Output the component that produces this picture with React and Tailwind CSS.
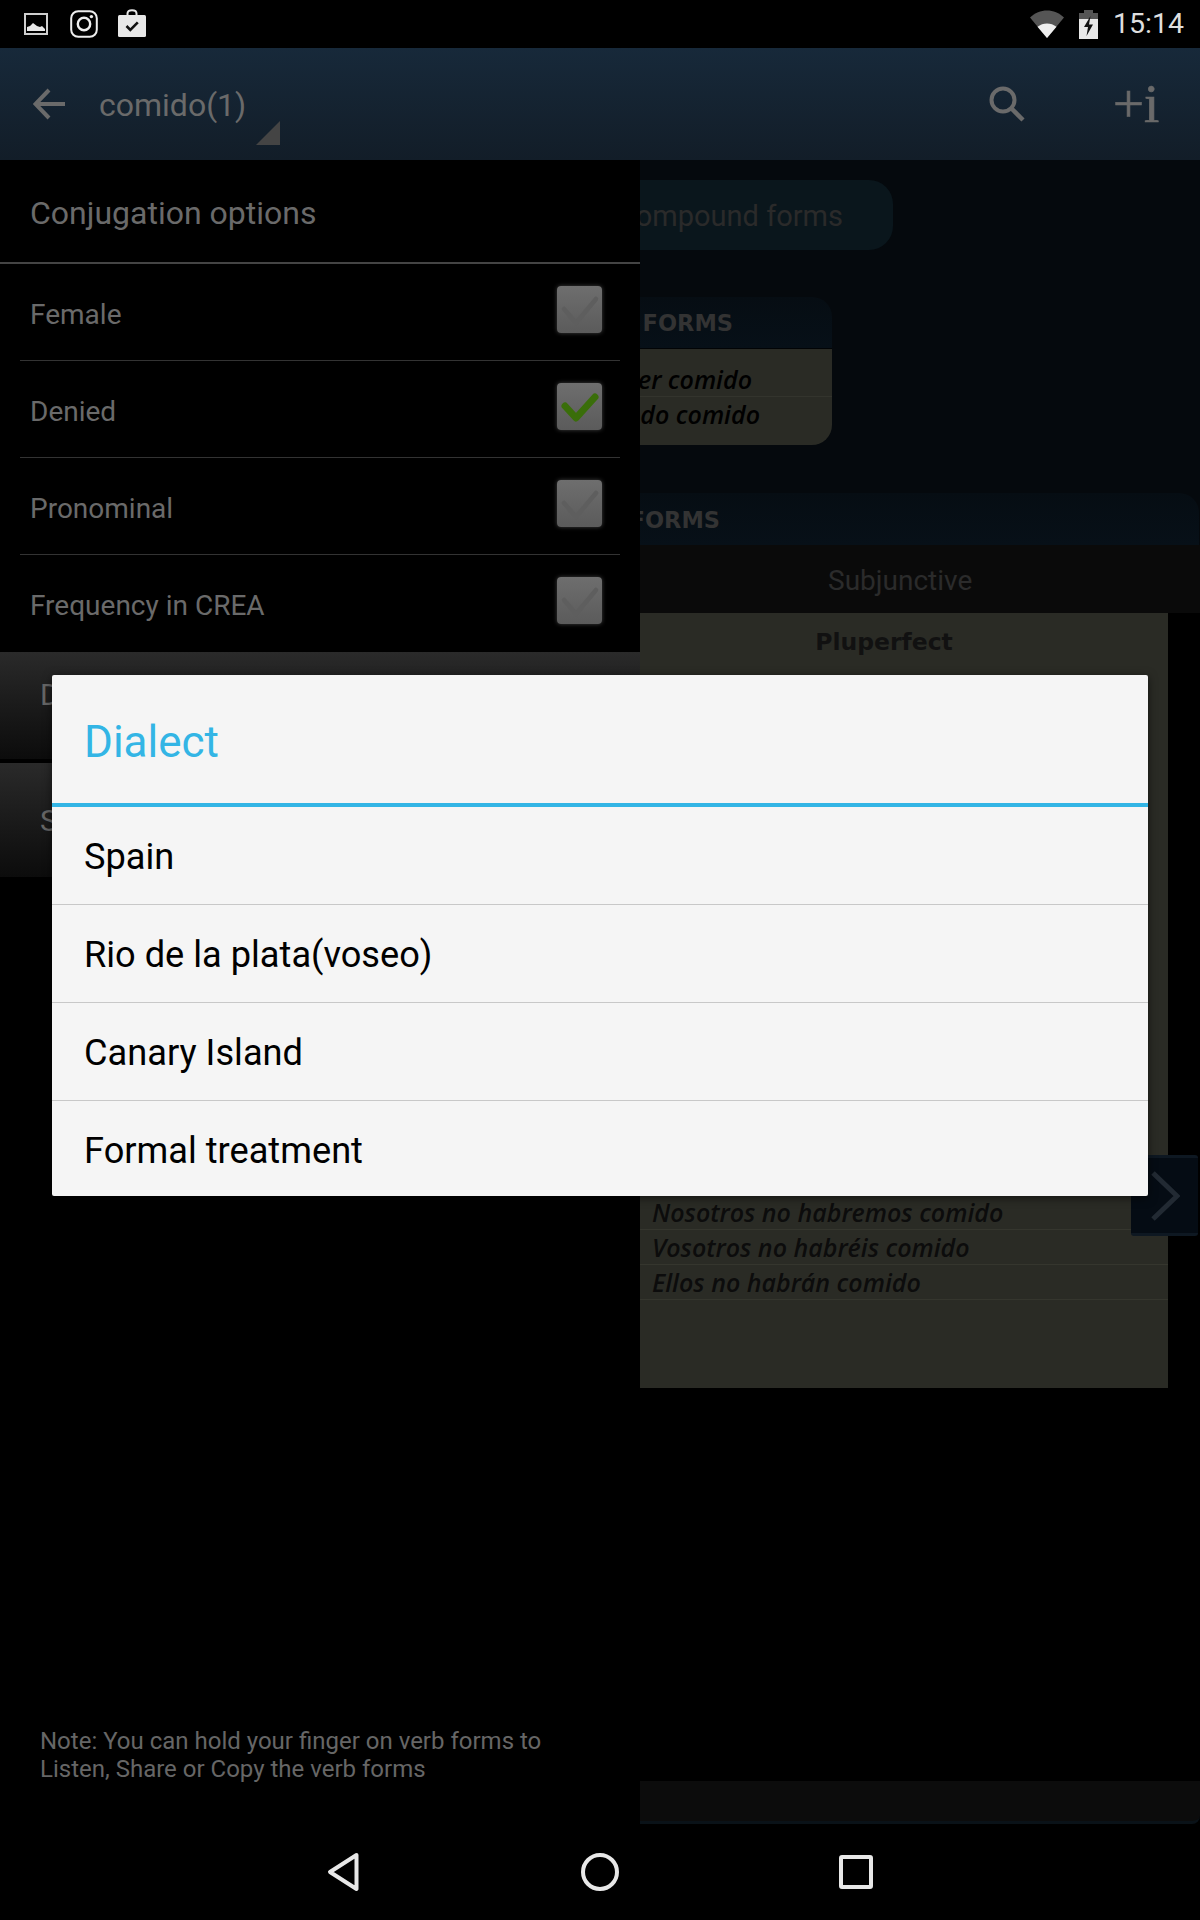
import React from 'react';

const font = { fontFamily: 'Roboto, sans-serif' };
const handFont = { fontFamily: '"Open Sans", sans-serif' };
const headFont = { fontFamily: '"DejaVu Sans", sans-serif' };

const options = [
  { label: 'Female', checked: false },
  { label: 'Denied', checked: true },
  { label: 'Pronominal', checked: false },
  { label: 'Frequency in CREA', checked: false },
];

const dialects = ['Spain', 'Rio de la plata(voseo)', 'Canary Island', 'Formal treatment'];

const verbRows = ['Nosotros no habremos comido', 'Vosotros no habréis comido', 'Ellos no habrán comido'];

const StatusLeft = () => (
  <div className="flex items-center">
    <svg width="24" height="24" viewBox="0 0 24 24" className="ml-[24px]">
      <rect x="1" y="2" width="22" height="20" fill="none" stroke="#cfcfcf" strokeWidth="2" />
      <path d="M3 19v-4l3-1 3-3 4 3 3 1 2-1 3 3v2z" fill="#e8e8e8" />
    </svg>
    <svg width="28" height="28" viewBox="0 0 28 28" className="ml-[22px]">
      <rect x="1.2" y="1.2" width="25.6" height="25.6" rx="7" fill="none" stroke="#eee" strokeWidth="2" />
      <circle cx="14" cy="14" r="6.2" fill="none" stroke="#eee" strokeWidth="2.4" />
      <circle cx="21.4" cy="6.6" r="1.7" fill="#eee" />
    </svg>
    <svg width="28" height="28" viewBox="0 0 28 28" className="ml-[20px] -mt-[3px]">
      <path d="M9.5 7V4.5C9.5 2.5 11 1.2 14 1.2s4.500 1.300 4.500 3.300V7" fill="none" stroke="#e8e8e8" strokeWidth="2" />
      <rect x="0" y="6" width="28" height="22" rx="1.500" fill="#e8e8e8" />
      <path d="M8.500 17l3.800 3.800 7.500-7.500" fill="none" stroke="#111" strokeWidth="2.600" />
    </svg>
  </div>
);

const StatusRight = () => (
  <div className="flex items-center">
    <svg width="34" height="28" viewBox="0 0 34 28">
      <path d="M0 7.500C9.500-2 24.500-2 34 7.500L17 28z" fill="#555" />
      <path d="M7.500 16.800c5.400-4.500 13.600-4.500 19 0L17 28z" fill="#efefef" />
    </svg>
    <svg width="19" height="29" viewBox="0 0 19 29" className="ml-[15px]">
      <rect x="5" y="0" width="9" height="4" fill="#555" />
      <rect x="0" y="3" width="19" height="7" fill="#555" />
      <rect x="0" y="9" width="19" height="20" fill="#e8e8e8" />
      <path d="M11.500 6L5 17h4l-1.500 9L14 14.500h-4z" fill="#111" />
    </svg>
    <span className="ml-[15px] mr-[16px] pt-[1px] text-[28.500px] leading-none text-[#dedede]" style={font}>15:14</span>
  </div>
);

const Checkbox = ({ checked }) => (
  <div className="-mt-[6px] h-[47px] w-[45px] rounded-[4px] bg-gradient-to-b from-[#6e6e6e] to-[#5b5b5b] shadow-[0_0_4px_rgba(110,110,110,0.6)]">
    <svg width="45" height="47" viewBox="0 0 45 47">
      {checked ? (
        <path d="M8 23l11 12L38 14" fill="none" stroke="#3a6e0a" strokeWidth="7" strokeLinecap="round" strokeLinejoin="round" />
      ) : (
        <path d="M7 23l12 14L39 13" fill="none" stroke="#5e5e5e" strokeWidth="4.500" strokeLinecap="round" strokeLinejoin="round" />
      )}
    </svg>
  </div>
);

const Drawer = () => (
  <aside className="absolute bottom-0 left-0 top-0 flex w-[640px] flex-col bg-black" style={font}>
    <div className="flex h-[104px] items-center border-b-2 border-[#444] pl-[30px] pt-[4px] text-[32px] text-[#6a6a6a]">
      Conjugation options
    </div>
    <div className="flex flex-col">
      {options.map((o, i) => (
        <div
          key={o.label}
          className={`mx-[20px] flex h-[97px] items-center justify-between pl-[10px] pr-[18px] text-[28px] text-[#6a6a6a] ${i < 3 ? 'border-b border-[#333]' : ''}`}
        >
          <span className="pt-[5px]">{o.label}</span>
          <Checkbox checked={o.checked} />
        </div>
      ))}
    </div>
    <div className="flex h-[107px] items-start bg-gradient-to-b from-[#2a2a2a] to-[#0c0c0c] pl-[40px] pt-[20px] text-[30px] text-[#666]">D</div>
    <div className="mt-[4px] flex h-[114px] items-center bg-gradient-to-b from-[#2a2a2a] to-[#0c0c0c] pl-[40px] text-[30px] text-[#666]">S</div>
    <p className="mt-auto mb-[41px] px-[40px] text-[24px] leading-[28px] text-[#666]">
      Note: You can hold your finger on verb forms to
      <br />
      Listen, Share or Copy the verb forms
    </p>
  </aside>
);

const DialectDialog = () => (
  <div
    className="absolute left-[52px] top-[515px] w-[1096px] rounded-[2px] bg-[#f5f5f5] shadow-[0_2px_10px_rgba(0,0,0,0.55)]"
    style={font}
  >
    <div className="flex h-[128px] items-center pl-[32px] pt-[6px] text-[44px] text-[#33b5e5]">Dialect</div>
    <div className="h-[4px] bg-[#33b5e5]" />
    {dialects.map((d, i) => (
      <div
        key={d}
        className={`flex items-center pl-[32px] text-[36.200px] text-black ${i < 3 ? 'h-[98px] border-b border-[#c8c8c8] pt-[4px]' : 'h-[95px] pt-[6px]'}`}
      >
        {d}
      </div>
    ))}
  </div>
);

const Content = () => (
  <div className="flex h-full flex-col bg-black" style={font}>
    <div className="flex flex-col bg-[#05090d] pt-[20px]">
      <div className="ml-[480px] flex h-[70px] w-[413px] items-center justify-end rounded-[24px] bg-[#0a161c] pr-[50px] pt-[4px] text-[29px] text-[#2a2a2a]">
        Compound forms
      </div>

      <div className="ml-[400px] mt-[47px] w-[432px] overflow-hidden rounded-[20px]">
        <div className="flex h-[52px] items-center justify-end border-b border-[#020406] bg-gradient-to-b from-[#060d13] to-[#071018] pr-[99px] pt-[3px] text-[22.500px] font-bold text-[#333]" style={headFont}>
          FORMS
        </div>
        <div className="flex h-[96px] flex-col bg-[#2a2b25] pt-[13px] text-[25px] font-semibold italic leading-[35px] text-black" style={handFont}>
          <div className="h-[35px] border-b border-[#33342d] pr-[80px] text-right">er comido</div>
          <div className="h-[35px] pr-[72px] text-right">ndo comido</div>
        </div>
      </div>

      <div className="ml-[300px] mr-[1px] mt-[48px] flex h-[52px] items-center justify-end rounded-t-[20px] bg-gradient-to-b from-[#060d13] to-[#071018] pr-[479px] pt-[3px] text-[22.500px] font-bold text-[#333]" style={headFont}>
        FORMS
      </div>
      <div className="flex h-[68px] items-center bg-[#0a0a0a] pl-[828px] pt-[4px] text-[28px] text-[#2b2b2b]">
        Subjunctive
      </div>
    </div>

    <div className="ml-[640px] flex h-[775px] w-[528px] flex-col bg-[#2a2b25]">
      <div className="pr-[40px] pt-[12px] text-center text-[23.500px] font-bold leading-[34px] text-[#111]" style={headFont}>Pluperfect</div>
      <div className="mt-[536px] flex flex-col text-[25px] font-semibold italic leading-[34px] text-[#0c0c0c]" style={handFont}>
        {verbRows.map((r) => (
          <div key={r} className="h-[35px] border-b border-[#35362e] pl-[12px]">{r}</div>
        ))}
      </div>
    </div>

    <div className="mt-auto ml-[640px] h-[43px] rounded-br-[8px] border-b-[3px] border-[#0a1218] bg-[#0c0c0c]" />
  </div>
);

const App = () => (
  <div className="flex h-[1920px] w-[1200px] flex-col overflow-hidden bg-black">
    <div className="flex h-[48px] shrink-0 items-center justify-between bg-black">
      <StatusLeft />
      <StatusRight />
    </div>

    <header className="flex h-[112px] shrink-0 items-center bg-gradient-to-b from-[#17293a] to-[#121d28]">
      <svg width="32" height="32" viewBox="0 0 32 32" className="ml-[33px]">
        <path d="M32 16H3M16 2L2.500 16 16 30" fill="none" stroke="#6a6a6a" strokeWidth="4" />
      </svg>
      <div className="relative ml-[34px] h-[60px] w-[180px]">
        <span className="block pt-[11px] text-[32px] leading-[40px] text-[#6a6a6a]" style={font}>comido(1)</span>
        <svg width="24" height="24" viewBox="0 0 24 24" className="absolute left-[157px] top-[47px]">
          <path d="M24 0v24H0z" fill="#444" />
        </svg>
      </div>
      <svg width="36" height="36" viewBox="0 0 36 36" className="ml-[710px]">
        <circle cx="14" cy="14" r="11.500" fill="none" stroke="#6a6a6a" strokeWidth="4" />
        <path d="M22.500 22.500L34 34" fill="none" stroke="#6a6a6a" strokeWidth="4.500" />
      </svg>
      <span className="ml-[88px] -mt-[2px] text-[55px] leading-none text-[#6a6a6a] [-webkit-text-stroke:0.7px_#6a6a6a]" style={{ fontFamily: '"Liberation Serif", serif' }}>+i</span>
    </header>

    <main className="relative min-h-0 flex-1">
      <Content />
      <Drawer />
      <div className="absolute left-[1131px] top-[995px] flex h-[81px] w-[67px] items-center justify-center rounded-[3px] border-y-[3px] border-[#0e1822] bg-[#050c14]">
        <svg width="30" height="52" viewBox="0 0 30 52">
          <path d="M3 3l24 23L3 49" fill="none" stroke="#222a33" strokeWidth="5" />
        </svg>
      </div>
      <DialectDialog />
    </main>

    <nav className="flex h-[96px] shrink-0 items-center bg-black">
      <svg width="32" height="40" viewBox="0 0 32 40" className="ml-[327px]">
        <path d="M29.500 3L3 20l26.500 17z" fill="none" stroke="#e8e8e8" strokeWidth="4" strokeLinejoin="round" />
      </svg>
      <svg width="38" height="38" viewBox="0 0 38 38" className="ml-[222px]">
        <circle cx="19" cy="19" r="17" fill="none" stroke="#e8e8e8" strokeWidth="4" />
      </svg>
      <svg width="34" height="34" viewBox="0 0 34 34" className="ml-[220px]">
        <rect x="2" y="2" width="30" height="30" rx="1" fill="none" stroke="#e8e8e8" strokeWidth="4" />
      </svg>
    </nav>
  </div>
);

export default App;
